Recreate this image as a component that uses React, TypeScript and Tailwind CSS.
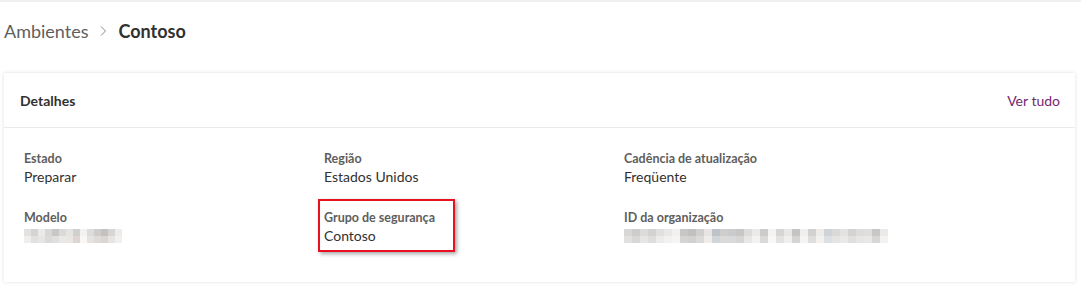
import React from "react";

const font = { fontFamily: "Lato, 'Noto Sans', sans-serif" };

// pixelated placeholders for the blurred values
const modelBlur = [
    ["#e4e2e0", "#d6d4d2", "#eceae8", "#d9d7d5", "#c9c7c5", "#dcdad8", "#e6e4e2", "#d2d0ce", "#f3f2f1", "#dedcda", "#cfcdcb", "#c4c2c0", "#d8d6d4", "#eeeceb"],
    ["#f0eeed", "#e3e1df", "#e8e6e4", "#dcdad8", "#e1dfdd", "#eae8e6", "#e9e7e5", "#ddd6d2", "#f8f7f6", "#e5e2e0", "#dfdbd9", "#d9d6d4", "#e7e5e3", "#f1f0ef"],
];

const idBlur = [
    ["#d9d7d6", "#cfcdcc", "#dcdbd9", "#d4d2d1", "#e2e0df", "#e9e8e7", "#f2f1f0", "#c8c6c5", "#c2c0bf", "#d1cfce", "#e6e5e4", "#bdc3c8", "#d0cecd", "#cacbcc", "#c8c6c4", "#dedcdb", "#ebeae9", "#cdcbca", "#f4f3f2", "#d7d5d4", "#e8e7e6", "#c6c4c3", "#f0efee", "#d3d1d0", "#ecebea", "#cfd2d6", "#dbd9d8", "#e4e2e1", "#d5d3d2", "#dedcda", "#e0dedc", "#c9c7c6", "#ebeae9"],
    ["#e3e1e0", "#dad8d7", "#e6e5e4", "#dfdddc", "#ecebea", "#f2f1f0", "#f6f5f4", "#d6d4d3", "#d3d1d0", "#dcdad9", "#eeedec", "#d0d5d8", "#dcdad9", "#d9dadb", "#d7d5d4", "#e8e7e6", "#f3f2f1", "#dbd9d8", "#f8f7f6", "#e4e2e1", "#f0efee", "#d6d4d3", "#f5f4f3", "#e0dedd", "#f2f1f0", "#dde0e3", "#e6e4e3", "#ebe9e8", "#e1dfde", "#e8e6e5", "#eae8e7", "#d8d6d5", "#f3f2f1"],
];

const Blur = ({ rows, cell }: { rows: string[][]; cell: string }) => (
    <div className="flex flex-col mt-[3px]">
        {rows.map((row, i) => (
            <div key={i} className="flex">
                {row.map((c, j) => (
                    <span key={j} className={cell} style={{ backgroundColor: c }} />
                ))}
            </div>
        ))}
    </div>
);

const Label = ({ children }: { children: React.ReactNode }) => (
    <div className="text-[12.5px] leading-[16px] font-bold text-[#605e5c]">{children}</div>
);

const Field = ({ label, children }: { label: string; children: React.ReactNode }) => (
    <div>
        <Label>{label}</Label>
        <div className="text-[14px] leading-[20px] text-[#323130]">{children}</div>
    </div>
);

export default function App() {
    return (
        <div className="w-[1081px] h-[286px] bg-white border-t-2 border-[#f0f0f0]" style={font}>
            <div className="flex items-center pl-[4px] h-[58px]">
                <span className="text-[18px] text-[#605e5c]">Ambientes</span>
                <svg width="12" height="12" viewBox="0 0 12 12" className="mx-[9px]">
                    <path d="M4 1.5 L8.5 6 L4 10.5" fill="none" stroke="#8a8886" strokeWidth="1" />
                </svg>
                <span className="text-[18px] font-bold text-[#323130]">Contoso</span>
            </div>

            <div className="ml-[4px] mr-[6px] mt-[13px] bg-white shadow-[0_0_4px_rgba(0,0,0,0.13)]">
                <div className="flex items-center justify-between h-[55px] pl-[16px] pr-[15px] border-b border-[#edebe9]">
                    <span className="text-[14px] font-bold text-[#323130]">Detalhes</span>
                    <a className="text-[14px] text-[#742774]">Ver tudo</a>
                </div>

                <div className="grid grid-cols-[300px_300px_1fr] gap-y-[23px] pl-[20px] pt-[23px] pb-[30px]">
                    <Field label="Estado">Preparar</Field>
                    <Field label="Região">Estados Unidos</Field>
                    <Field label="Cadência de atualização">Freqüente</Field>

                    <div>
                        <Label>Modelo</Label>
                        <Blur rows={modelBlur} cell="w-[7px] h-[7px]" />
                    </div>
                    <div>
                        <div className="-ml-[6px] -mt-[11px] w-[137px] pl-[4px] pt-[9px] pb-[4px] border-2 border-[#e81123] shadow-[2px_2px_4px_rgba(0,0,0,0.35)]">
                            <Field label="Grupo de segurança">Contoso</Field>
                        </div>
                    </div>
                    <div>
                        <Label>ID da organização</Label>
                        <Blur rows={idBlur} cell="w-[8px] h-[7px]" />
                    </div>
                </div>
            </div>
        </div>
    );
}
